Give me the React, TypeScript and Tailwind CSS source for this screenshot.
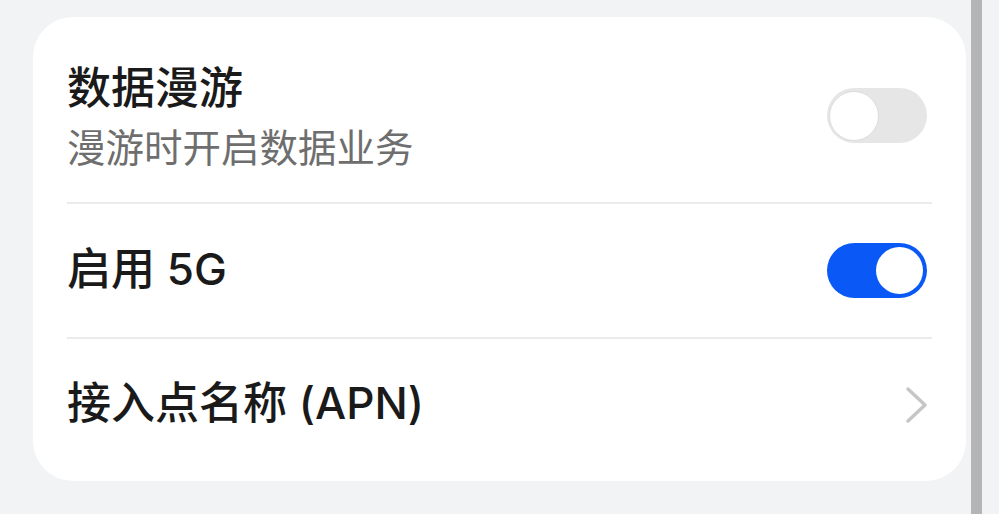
type ToggleProps = {
  on: boolean
}

function Toggle({ on }: ToggleProps) {
  // Track 100x55, knob sits inside with a small inset
  return (
    <div
      className={
        on
          ? "w-[100px] h-[55px] rounded-full bg-[#0a59f7] flex items-center justify-end px-[4px]"
          : "w-[100px] h-[55px] rounded-full bg-[#e6e6e6] flex items-center justify-start px-[2px]"
      }
    >
      <div
        className={
          on
            ? "w-[47px] h-[47px] rounded-full bg-white"
            : "w-[50px] h-[50px] rounded-full bg-white border border-[#dcdcdc]"
        }
      />
    </div>
  )
}

function Divider() {
  return <div className="h-[2px] bg-[#ebebeb] mr-[-5px]" />
}

export default function App() {
  return (
    <div
      className="w-[999px] h-[514px] bg-[#f1f3f5] flex overflow-hidden"
      style={{ fontFamily: 'Inter, "Noto Sans CJK SC", "Noto Sans", sans-serif' }}
    >
      <div className="pl-[33px] pt-[17px]">
        <div className="w-[933px] h-[464px] bg-white rounded-[40px] pl-[34px] pr-[39px] pt-[20px]">
          {/* 数据漫游 */}
          <div className="flex items-center justify-between pt-[23px] pb-[28px] h-[165px]">
            <div className="flex flex-col">
              <div className="text-[44px] leading-[56px] font-medium text-[#1a1a1a]">数据漫游</div>
              <div className="text-[38.5px] leading-[52px] mt-[6px] text-[#6e6e6e]">漫游时开启数据业务</div>
            </div>
            <div className="mt-[-3px]">
              <Toggle on={false} />
            </div>
          </div>
          <Divider />

          {/* 启用 5G */}
          <div className="flex items-center justify-between h-[133px]">
            <div className="text-[44px] leading-[56px] font-medium text-[#1a1a1a] mb-[4px]">启用 5G</div>
            <Toggle on={true} />
          </div>
          <Divider />

          {/* 接入点名称 */}
          <div className="flex items-center justify-between h-[133px]">
            <div className="text-[44px] leading-[56px] font-medium text-[#1a1a1a] mb-[6px]">接入点名称 (APN)</div>
            <svg width="24" height="40" viewBox="0 0 24 40" className="mr-[-1px] mb-[2px]">
              <polyline
                points="4,4 21,20 4,36"
                fill="none"
                stroke="#c6c6c6"
                strokeWidth="3.5"
                strokeLinecap="round"
                strokeLinejoin="round"
              />
            </svg>
          </div>
        </div>
      </div>
      <div className="ml-[5px] w-[11px] h-full bg-[#b5b5b5]" />
    </div>
  )
}
